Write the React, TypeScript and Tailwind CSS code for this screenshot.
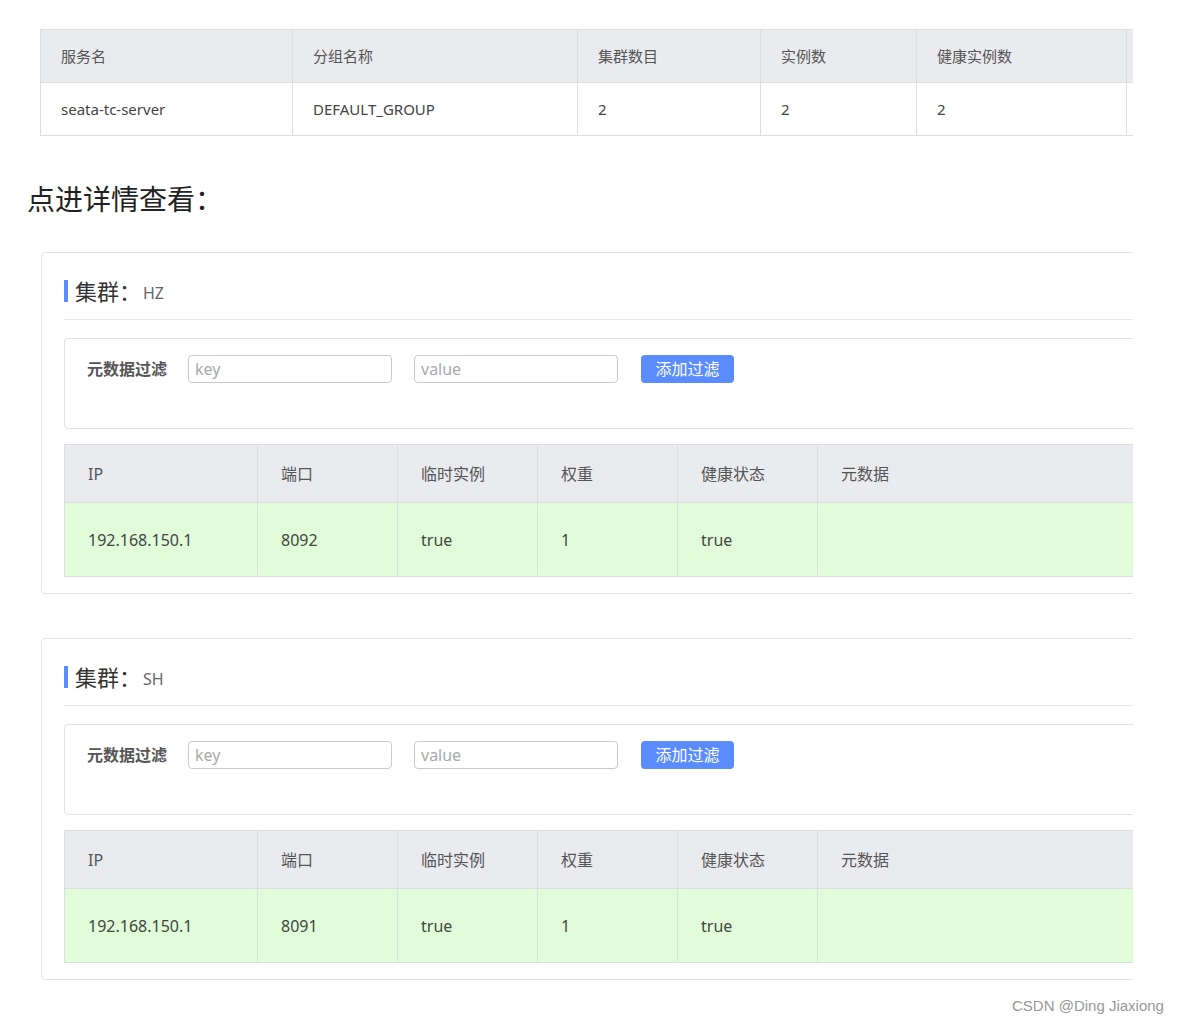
const font = "font-['Noto_Sans','Noto_Sans_CJK_SC',sans-serif]";

const topHead = ["服务名", "分组名称", "集群数目", "实例数", "健康实例数"];
const topRow = ["seata-tc-server", "DEFAULT_GROUP", "2", "2", "2"];
const topWidths = ["w-[252px]", "w-[285px]", "w-[183px]", "w-[156px]", "w-[210px]"];

const instHead = ["IP", "端口", "临时实例", "权重", "健康状态", "元数据"];
const instWidths = ["w-[193px]", "w-[140px]", "w-[140px]", "w-[140px]", "w-[140px]", "w-[340px]"];

function ClusterCard({ name, port }: { name: string; port: string }) {
  const row = ["192.168.150.1", port, "true", "1", "true", ""];
  return (
    <div className="ml-[41px] w-[1120px] border border-[#e4e5e8] rounded-[4px] px-[22px] pt-[26px] pb-[16px]">
      <div className="flex items-center h-[24px]">
        <span className="w-[4px] h-[22px] bg-[#5b8cff]" />
        <span className="ml-[7px] text-[22px] text-[#333] leading-none">集群：</span>
        <span className="ml-[2px] text-[16px] text-[#666] leading-none mt-[3px]">{name}</span>
      </div>
      <div className="mt-[16px] border-t border-[#e8e8ea]" />
      <div className="mt-[18px] border border-[#e2e3e6] rounded-[4px] h-[91px] px-[22px] pt-[16px]">
        <div className="flex items-center">
          <span className="text-[16px] font-bold text-[#555] w-[101px]">元数据过滤</span>
          <div className="w-[204px] h-[28px] border border-[#c9cbd1] rounded-[4px] px-[6px] flex items-center text-[16px] text-[#a9a9a9]">key</div>
          <div className="ml-[22px] w-[204px] h-[28px] border border-[#c9cbd1] rounded-[4px] px-[6px] flex items-center text-[16px] text-[#a9a9a9]">value</div>
          <div className="ml-[23px] w-[93px] h-[28px] bg-[#5b8cff] rounded-[4px] flex items-center justify-center text-[16px] text-white">添加过滤</div>
        </div>
      </div>
      <div className="mt-[15px] border border-[#dcdee2]">
        <div className="flex h-[58px] bg-[#eaebef] border-b border-[#dcdee2]">
          {instHead.map((h, i) => (
            <div key={h} className={`${instWidths[i]} shrink-0 ${i < 5 ? "border-r border-[#dcdee2]" : ""} pl-[23px] flex items-center text-[16px] text-[#555]`}>{h}</div>
          ))}
        </div>
        <div className="flex h-[73px] bg-[#e1fcd9]">
          {row.map((c, i) => (
            <div key={i} className={`${instWidths[i]} shrink-0 ${i < 5 ? "border-r border-[#dcdee2]" : ""} pl-[23px] flex items-center text-[16px] text-[#444]`}>{c}</div>
          ))}
        </div>
      </div>
    </div>
  );
}

export default function App() {
  return (
    <div className={`${font} relative w-[1184px] h-[1023px] bg-white overflow-hidden`}>
      <div className="w-[1133px] overflow-hidden pt-[29px]">
        <div className="ml-[40px] w-[1120px] border border-[#dcdee2]">
          <div className="flex h-[53px] bg-[#eaebef] border-b border-[#dcdee2]">
            {topHead.map((h, i) => (
              <div key={h} className={`${topWidths[i]} shrink-0 border-r border-[#dcdee2] pl-[20px] flex items-center text-[15px] text-[#555]`}>{h}</div>
            ))}
            <div className="flex-1" />
          </div>
          <div className="flex h-[52px] bg-white">
            {topRow.map((c, i) => (
              <div key={i} className={`${topWidths[i]} shrink-0 border-r border-[#dcdee2] pl-[20px] flex items-center text-[15px] text-[#444]`}>{c}</div>
            ))}
            <div className="flex-1" />
          </div>
        </div>

        <div className="mt-[43px] ml-[27px] text-[28px] text-[#222] leading-[40px]">点进详情查看：</div>

        <div className="mt-[33px]">
          <ClusterCard name="HZ" port="8092" />
        </div>
        <div className="mt-[44px]">
          <ClusterCard name="SH" port="8091" />
        </div>
      </div>
      <div className="absolute left-[1012px] top-[995px] text-[15px] text-[#999] font-['Liberation_Sans',sans-serif]">CSDN @Ding Jiaxiong</div>
    </div>
  );
}
